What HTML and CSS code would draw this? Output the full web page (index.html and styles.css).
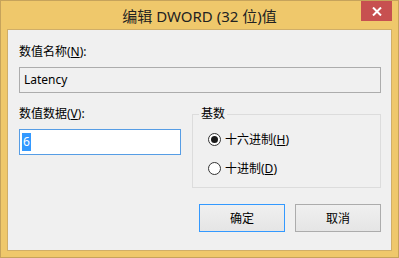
FILE: index.html
```html
<!DOCTYPE html>
<html lang="zh-CN">
<head>
<meta charset="utf-8">
<title>编辑 DWORD (32 位)值</title>
<link rel="stylesheet" href="styles.css">
</head>
<body>
<div class="window">
  <div class="titlebar">
    <div class="spacer"></div>
    <div class="title">编辑 DWORD (32 位)值</div>
    <div class="close"><svg width="10" height="9" viewBox="0 0 10 9"><path d="M1 0.5 L9 8.5 M9 0.5 L1 8.5" stroke="#fff" stroke-width="2"/></svg></div>
  </div>
  <div class="client">
    <div class="label">数值名称(<u>N</u>):</div>
    <div class="field readonly">Latency</div>
    <div class="row">
      <div class="col-left">
        <div class="label">数值数据(<u>V</u>):</div>
        <div class="field focused"><span class="sel">6</span></div>
      </div>
      <fieldset class="group">
        <legend>基数</legend>
        <div class="radio first"><span class="dot checked"></span><span>十六进制(<u>H</u>)</span></div>
        <div class="radio"><span class="dot"></span><span>十进制(<u>D</u>)</span></div>
      </fieldset>
    </div>
    <div class="buttons">
      <div class="btn default">确定</div>
      <div class="btn">取消</div>
    </div>
  </div>
</div>
</body>
</html>
```
FILE: styles.css
```css
html, body { margin: 0; padding: 0; }
body {
  width: 399px; height: 258px; overflow: hidden;
  font-family: "Noto Sans", "Noto Sans CJK SC", sans-serif;
  font-size: 12px; color: #000;
}
.window {
  box-sizing: border-box; width: 399px; height: 258px;
  background: #efc86b; border: 1px solid #c6a35b;
  padding: 0 6px 6px 6px;
  display: flex; flex-direction: column;
}
.titlebar {
  height: 28px; display: grid; grid-template-columns: 1fr auto 1fr;
}
.title {
  font-size: 15px; line-height: 28px; color: #222;
  padding-top: 1px;
}
.close {
  justify-self: end; width: 31px; height: 20px; background: #c75050;
  display: flex; align-items: center; justify-content: center;
}
.client {
  flex: 1; box-sizing: border-box;
  background: #f0f0f0; border: 1px solid #d0ae68;
  padding: 14px 10px 0 11px;
}
.label { line-height: 16px; height: 16px; }
.field {
  box-sizing: border-box; height: 26px; margin-top: 7px;
  border: 1px solid #acacac; line-height: 24px; padding-left: 4px;
}
.readonly { background: #f0f0f0; }
.focused { background: #fff; border-color: #569de5; padding-left: 2px; display: flex; align-items: center; }
.sel { background: #3399ff; color: #fff; line-height: 18px; padding: 0 1px; }
.row { display: flex; margin-top: 13px; }
.col-left { width: 162px; margin-right: 11px; }
.group {
  box-sizing: border-box; width: 189px; height: 82px; margin: 0;
  border: 1px solid #dcdcdc; padding: 0 0 0 6px; min-width: 0;
}
.group legend { padding: 0 2px; line-height: 16px; }
.radio { display: flex; align-items: center; height: 16px; padding-left: 9px; }
.radio + .radio { margin-top: 13px; }
.radio.first { margin-top: 9px; }
.dot {
  box-sizing: border-box; width: 13px; height: 13px; border-radius: 50%;
  border: 1px solid #333; background: #fff; margin-right: 4px;
  display: flex; align-items: center; justify-content: center;
}
.dot.checked::after {
  content: ""; width: 7px; height: 7px; border-radius: 50%; background: #1a1a1a;
}
.buttons { display: flex; justify-content: flex-end; gap: 10px; margin-top: 16px; }
.btn {
  box-sizing: border-box; width: 86px; height: 28px;
  border: 1px solid #acacac; background: linear-gradient(#f0f0f0, #e5e5e5);
  display: flex; align-items: center; justify-content: center;
}
.btn.default { border-color: #3399ff; }
u { text-decoration: underline; text-underline-offset: 1px; }
```
